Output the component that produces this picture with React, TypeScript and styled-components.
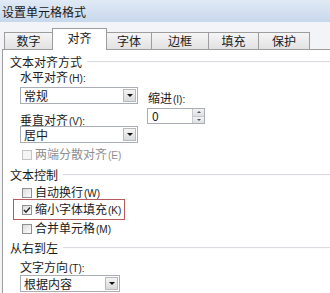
import styled, { createGlobalStyle } from "styled-components";

const GlobalStyle = createGlobalStyle`
  html, body {
    margin: 0;
    padding: 0;
    background: #fff;
  }
  body {
    font-family: "Noto Sans CJK SC", "Liberation Sans", sans-serif;
    font-size: 12px;
    color: #1b1b1b;
  }
`;

const Window = styled.div`
  width: 330px;
  height: 293px;
  overflow: hidden;
  display: flex;
  flex-direction: column;
  background: #f2f4f7;
`;

const TitleBar = styled.div`
  height: 22px;
  flex-shrink: 0;
  display: flex;
  align-items: center;
  padding: 2px 0 0 2px;
  box-sizing: border-box;
  background: linear-gradient(#e1eaf6, #c7d8ec);
  color: #1a1a1a;
  line-height: 14px;
`;

const TabStrip = styled.div`
  height: 27px;
  flex-shrink: 0;
  display: flex;
  align-items: flex-end;
  padding-left: 5px;
  box-sizing: border-box;
`;

const Tab = styled.div<{ $w: number; $active?: boolean }>`
  width: ${p => p.$w}px;
  height: ${p => (p.$active ? 22 : 17)}px;
  margin-bottom: ${p => (p.$active ? -1 : 0)}px;
  margin-left: -1px;
  position: relative;
  z-index: ${p => (p.$active ? 1 : 0)};
  box-sizing: border-box;
  border: 1px solid #9d9d9d;
  border-bottom: none;
  background: ${p => (p.$active ? "#fff" : "linear-gradient(#f5f5f5, #e2e2e2)")};
  display: flex;
  align-items: center;
  justify-content: center;
  padding-bottom: ${p => (p.$active ? 4 : 0)}px;
  line-height: 14px;
`;

const Panel = styled.div`
  flex: 1;
  margin-left: 2px;
  background: #fff;
  border-top: 1px solid #9d9d9d;
  border-left: 1px solid #9d9d9d;
  padding: 5px 0 0 7px;
  display: flex;
  flex-direction: column;
`;

const GroupHeading = styled.div<{ $gap?: number }>`
  height: 14px;
  margin-top: ${p => p.$gap ?? 0}px;
  display: flex;
  align-items: center;
  gap: 5px;
  line-height: 14px;
  &::after {
    content: "";
    flex: 1;
    border-top: 1px solid #d9dde2;
    border-bottom: 1px solid #fbfbfb;
  }
`;

const GroupBody = styled.div`
  display: flex;
  flex-direction: column;
  padding-left: 10px;
`;

const Columns = styled.div`
  display: flex;
  gap: 10px;
`;

const Column = styled.div<{ $top?: number }>`
  display: flex;
  flex-direction: column;
  padding-top: ${p => p.$top ?? 0}px;
`;

const FieldLabel = styled.div<{ $gap?: number }>`
  height: 13px;
  line-height: 13px;
  margin-top: ${p => p.$gap ?? 0}px;
  white-space: nowrap;
`;

// the access key part, e.g. "(H):", drawn smaller like the Windows dialog font
const Key = styled.span`
  font-family: "Liberation Sans", sans-serif;
  font-size: 10px;
  margin-left: 1px;
  color: inherit;
`;

const Combo = styled.div<{ $w: number; $gap?: number }>`
  width: ${p => p.$w}px;
  height: 17px;
  margin-top: ${p => p.$gap ?? 0}px;
  box-sizing: border-box;
  border: 1px solid #a9adb4;
  background: #fff;
  display: flex;
  align-items: center;
  justify-content: space-between;
  padding: 0 1px 0 3px;
  line-height: 14px;
`;

const DropButton = styled.div`
  width: 13px;
  height: 13px;
  box-sizing: border-box;
  border: 1px solid #b6b9be;
  background: linear-gradient(#f4f4f4, #d9dadc);
  display: flex;
  align-items: center;
  justify-content: center;
  &::after {
    content: "";
    border-left: 3px solid transparent;
    border-right: 3px solid transparent;
    border-top: 3px solid #111;
  }
`;

const Spin = styled.div`
  width: 58px;
  height: 16px;
  margin-top: 4px;
  margin-left: -1px;
  box-sizing: border-box;
  border: 1px solid #a9adb4;
  display: flex;
  align-items: center;
  justify-content: space-between;
  padding-left: 4px;
  line-height: 14px;
`;

const SpinButtons = styled.div`
  width: 11px;
  height: 14px;
  display: flex;
  flex-direction: column;
  border-left: 1px solid #c6c8cc;
`;

const SpinHalf = styled.div<{ $down?: boolean }>`
  flex: 1;
  display: flex;
  align-items: center;
  justify-content: center;
  background: linear-gradient(#f3f3f3, #dedfe1);
  border-bottom: ${p => (p.$down ? "none" : "1px solid #c6c8cc")};
  &::after {
    content: "";
    border-left: 2px solid transparent;
    border-right: 2px solid transparent;
    ${p => (p.$down ? "border-top: 2px solid #555;" : "border-bottom: 2px solid #555;")}
  }
`;

const CheckRow = styled.div<{ $gap?: number; $disabled?: boolean }>`
  height: 13px;
  margin-top: ${p => p.$gap ?? 0}px;
  padding-left: 2px;
  display: flex;
  align-items: center;
  gap: 3px;
  line-height: 13px;
  color: ${p => (p.$disabled ? "#8e8e8e" : "inherit")};
  white-space: nowrap;
`;

const Box = styled.div<{ $disabled?: boolean }>`
  width: 10px;
  height: 10px;
  flex-shrink: 0;
  box-sizing: border-box;
  border: 1px solid ${p => (p.$disabled ? "#c4c4c4" : "#8f8f8f")};
  background: ${p => (p.$disabled ? "#f4f4f4" : "linear-gradient(135deg, #dcdcdc, #fdfdfd)")};
  display: flex;
  align-items: center;
  justify-content: center;
`;

const Highlight = styled.div<{ $gap?: number }>`
  width: 112px;
  margin-top: ${p => p.$gap ?? 0}px;
  margin-left: -7px;
  box-sizing: border-box;
  border: 1px solid #b65a5e;
  padding: 3px 0 3px 6px;
`;

function Check({ checked, disabled }: { checked?: boolean; disabled?: boolean }) {
  return (
    <Box $disabled={disabled}>
      {checked && (
        <svg width="8" height="8" viewBox="0 0 8 8">
          <path d="M1 4 L3 6.2 L7 1.4" fill="none" stroke="#2a2a2a" strokeWidth="1.5" />
        </svg>
      )}
    </Box>
  );
}

const tabs = [
  { label: "数字", w: 49 },
  { label: "对齐", w: 55, active: true },
  { label: "字体", w: 46 },
  { label: "边框", w: 58 },
  { label: "填充", w: 51 },
  { label: "保护", w: 52 },
];

export default function App() {
  return (
    <Window>
      <GlobalStyle />
      <TitleBar>设置单元格格式</TitleBar>
      <TabStrip>
        {tabs.map(t => (
          <Tab key={t.label} $w={t.w} $active={t.active}>
            {t.label}
          </Tab>
        ))}
      </TabStrip>
      <Panel>
        <GroupHeading>文本对齐方式</GroupHeading>
        <GroupBody>
          <Columns>
            <Column>
              <FieldLabel $gap={1}>
                水平对齐<Key>(H):</Key>
              </FieldLabel>
              <Combo $w={118} $gap={4}>
                常规
                <DropButton />
              </Combo>
              <FieldLabel $gap={9}>
                垂直对齐<Key>(V):</Key>
              </FieldLabel>
              <Combo $w={118}>
                居中
                <DropButton />
              </Combo>
            </Column>
            <Column $top={22}>
              <FieldLabel>
                缩进<Key>(I):</Key>
              </FieldLabel>
              <Spin>
                0
                <SpinButtons>
                  <SpinHalf />
                  <SpinHalf $down />
                </SpinButtons>
              </Spin>
            </Column>
          </Columns>
          <CheckRow $gap={5} $disabled>
            <Check disabled />
            <span>
              两端分散对齐<Key>(E)</Key>
            </span>
          </CheckRow>
        </GroupBody>

        <GroupHeading $gap={7}>文本控制</GroupHeading>
        <GroupBody>
          <CheckRow $gap={4}>
            <Check />
            <span>
              自动换行<Key>(W)</Key>
            </span>
          </CheckRow>
          <Highlight>
            <CheckRow>
              <Check checked />
              <span>
                缩小字体填充<Key>(K)</Key>
              </span>
            </CheckRow>
          </Highlight>
          <CheckRow $gap={2}>
            <Check />
            <span>
              合并单元格<Key>(M)</Key>
            </span>
          </CheckRow>
        </GroupBody>

        <GroupHeading $gap={6}>从右到左</GroupHeading>
        <GroupBody>
          <FieldLabel $gap={5}>
            文字方向<Key>(T):</Key>
          </FieldLabel>
          <Combo $w={100} $gap={2}>
            根据内容
            <DropButton />
          </Combo>
        </GroupBody>
      </Panel>
    </Window>
  );
}
